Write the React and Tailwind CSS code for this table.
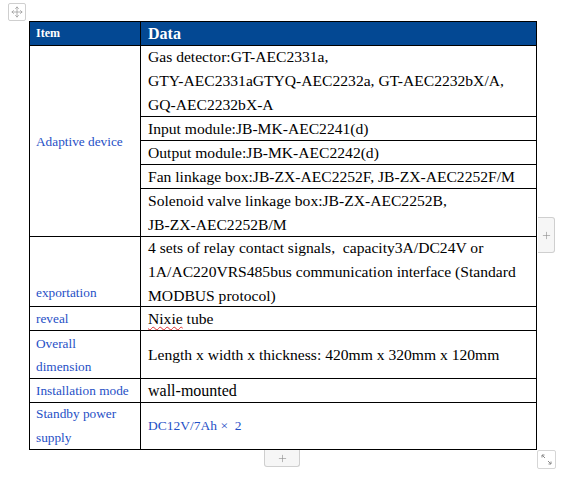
import { Move, Plus } from 'lucide-react'

const adaptive = [
  { h: 'h-[71px]', lines: ['Gas detector:GT-AEC2331a,', 'GTY-AEC2331aGTYQ-AEC2232a, GT-AEC2232bX/A,', 'GQ-AEC2232bX-A'] },
  { h: 'h-[24px]', lines: ['Input module:JB-MK-AEC2241(d)'] },
  { h: 'h-[24px]', lines: ['Output module:JB-MK-AEC2242(d)'] },
  { h: 'h-[24px]', lines: ['Fan linkage box:JB-ZX-AEC2252F, JB-ZX-AEC2252F/M'] },
  { h: 'h-[47px]', lines: ['Solenoid valve linkage box:JB-ZX-AEC2252B,', 'JB-ZX-AEC2252B/M'], last: true },
]

const Label = ({ children, className = '' }) => (
  <div className={`w-[111px] shrink-0 border-r border-black pl-[6px] text-[13.3px] text-[#1f50c6] whitespace-nowrap flex ${className}`}>
    {children}
  </div>
)

const Data = ({ children, size = 'text-[15.6px]', color = 'text-black' }) => (
  <div className={`flex-1 pl-[7px] ${size} ${color} leading-[24px] whitespace-nowrap flex items-center`}>
    <div>{children}</div>
  </div>
)

const App = () => {
  return (
    <div className="relative w-[582px] h-[481px] bg-white font-[Liberation_Serif,Times_New_Roman,serif] pl-[29px] pt-[21px]">
      {/* table handle */}
      <div className="absolute left-[8px] top-[3px] w-[18px] h-[18px] border border-[#cfcfcf] rounded-[2px] bg-white flex items-center justify-center text-[#9a9a9a]">
        <Move size={12} strokeWidth={1.5} />
      </div>

      <div className="w-[508px] border border-black">
        {/* header */}
        <div className="h-[24px] flex bg-[#034893] border-b border-black text-white font-bold">
          <div className="w-[111px] shrink-0 border-r border-black pl-[6px] text-[12px] leading-[23px]">Item</div>
          <div className="flex-1 pl-[7px] text-[16px] leading-[23px]">Data</div>
        </div>

        <div className="h-[191px] flex border-b border-black">
          <Label className="items-center leading-[23px]">Adaptive device</Label>
          <div className="flex-1 flex flex-col">
            {adaptive.map((row, i) => (
              <div key={i} className={`${row.h} flex ${row.last ? '' : 'border-b border-black'}`}>
                <Data>
                  {row.lines.map((l, j) => (
                    <div key={j}>{l}</div>
                  ))}
                </Data>
              </div>
            ))}
          </div>
        </div>

        <div className="h-[70px] flex border-b border-black">
          <Label className="items-end pb-[2px] leading-[23px]">exportation</Label>
          <Data>
            <div>4 sets of relay contact signals,&nbsp; capacity3A/DC24V or</div>
            <div>1A/AC220VRS485bus communication interface (Standard</div>
            <div>MODBUS protocol)</div>
          </Data>
        </div>

        <div className="h-[24px] flex border-b border-black">
          <Label className="items-center leading-[23px]">reveal</Label>
          <Data>
            <span className="underline decoration-wavy decoration-[#e03030] decoration-1 underline-offset-[2px]">Nixie</span> tube
          </Data>
        </div>

        <div className="h-[48px] flex border-b border-black">
          <Label className="flex-col justify-center leading-[23px]">
            <div>Overall</div>
            <div>dimension</div>
          </Label>
          <Data>Length x width x thickness: 420mm x 320mm x 120mm</Data>
        </div>

        <div className="h-[24px] flex border-b border-black">
          <Label className="items-center leading-[23px]">Installation mode</Label>
          <Data size="text-[16px]">wall-mounted</Data>
        </div>

        <div className="h-[46px] flex">
          <Label className="flex-col justify-center leading-[24px]">
            <div>Standby power</div>
            <div>supply</div>
          </Label>
          <Data size="text-[13.5px]" color="text-[#1f50c6]">DC12V/7Ah&nbsp;×&nbsp; 2</Data>
        </div>
      </div>

      {/* add column */}
      <div className="absolute left-[538px] top-[217px] w-[17px] h-[36px] border border-l-0 border-[#cfcfcf] rounded-r-[3px] bg-[#f6f6f6] flex items-center justify-center text-[#8a8a8a]">
        <Plus size={11} strokeWidth={1.3} />
      </div>

      {/* add row */}
      <div className="absolute left-[264px] top-[450px] w-[36px] h-[17px] border border-t-0 border-[#cfcfcf] rounded-b-[3px] bg-[#f6f6f6] flex items-center justify-center text-[#8a8a8a]">
        <Plus size={11} strokeWidth={1.3} />
      </div>

      {/* resize */}
      <div className="absolute left-[537px] top-[450px] w-[19px] h-[19px] border border-[#d6d6d6] rounded-[2px] bg-white">
        <svg width="17" height="17" viewBox="0 0 17 17" className="text-[#8a8a8a]">
          <path d="M4 4 L7 7 M4 4 L4 6.5 M4 4 L6.5 4" stroke="currentColor" strokeWidth="1" fill="none" />
          <path d="M13 13 L10 10 M13 13 L13 10.5 M13 13 L10.5 13" stroke="currentColor" strokeWidth="1" fill="none" />
        </svg>
      </div>
    </div>
  )
}

export default App
